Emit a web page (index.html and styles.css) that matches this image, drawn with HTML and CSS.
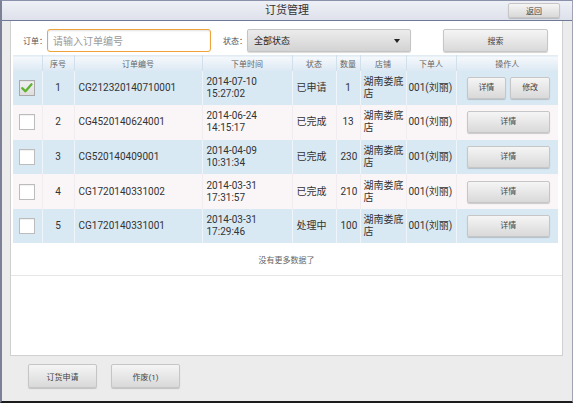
FILE: index.html
```html
<!DOCTYPE html>
<html lang="zh-CN">
<head>
<meta charset="utf-8">
<title>订货管理</title>
<link rel="stylesheet" href="styles.css">
</head>
<body>
<div class="app">
  <header class="topbar">
    <div class="topbar-side"></div>
    <div class="title">订货管理</div>
    <div class="topbar-side topbar-right"><div class="btn btn-back">返回</div></div>
  </header>
  <main class="panel">
    <div class="search">
      <span class="label">订单：</span>
      <div class="input">请输入订单编号</div>
      <span class="label label-state">状态：</span>
      <div class="select"><span>全部状态</span><span class="caret"></span></div>
      <div class="btn btn-search">搜索</div>
    </div>
    <table class="grid">
      <colgroup>
        <col class="c-cb"><col class="c-no"><col class="c-code"><col class="c-time"><col class="c-state"><col class="c-qty"><col class="c-shop"><col class="c-user"><col class="c-op">
      </colgroup>
      <thead>
        <tr><th></th><th>序号</th><th>订单编号</th><th>下单时间</th><th>状态</th><th>数量</th><th>店铺</th><th>下单人</th><th>操作人</th></tr>
      </thead>
      <tbody>
        <tr class="odd">
          <td><div class="cb checked"><svg viewBox="0 0 16 16" width="14" height="14"><path d="M2.5 8.2 L6.3 11.8 L13.2 3.8" fill="none" stroke="#62b232" stroke-width="2.6" stroke-linecap="round" stroke-linejoin="round"/></svg></div></td>
          <td class="center">1</td><td>CG212320140710001</td><td>2014-07-10<br>15:27:02</td><td>已申请</td><td class="center">1</td><td class="shop">湖南娄底店</td><td class="user">001(刘丽)</td>
          <td class="op"><div class="ops"><div class="btn btn-sm">详情</div><div class="btn btn-sm">修改</div></div></td>
        </tr>
        <tr class="even">
          <td><div class="cb"></div></td>
          <td class="center">2</td><td>CG4520140624001</td><td>2014-06-24<br>14:15:17</td><td>已完成</td><td class="center">13</td><td class="shop">湖南娄底店</td><td class="user">001(刘丽)</td>
          <td class="op"><div class="ops"><div class="btn btn-sm">详情</div></div></td>
        </tr>
        <tr class="odd">
          <td><div class="cb"></div></td>
          <td class="center">3</td><td>CG520140409001</td><td>2014-04-09<br>10:31:34</td><td>已完成</td><td class="center">230</td><td class="shop">湖南娄底店</td><td class="user">001(刘丽)</td>
          <td class="op"><div class="ops"><div class="btn btn-sm">详情</div></div></td>
        </tr>
        <tr class="even">
          <td><div class="cb"></div></td>
          <td class="center">4</td><td>CG1720140331002</td><td>2014-03-31<br>17:31:57</td><td>已完成</td><td class="center">210</td><td class="shop">湖南娄底店</td><td class="user">001(刘丽)</td>
          <td class="op"><div class="ops"><div class="btn btn-sm">详情</div></div></td>
        </tr>
        <tr class="odd">
          <td><div class="cb"></div></td>
          <td class="center">5</td><td>CG1720140331001</td><td>2014-03-31<br>17:29:46</td><td>处理中</td><td class="center">100</td><td class="shop">湖南娄底店</td><td class="user">001(刘丽)</td>
          <td class="op"><div class="ops"><div class="btn btn-sm">详情</div></div></td>
        </tr>
      </tbody>
    </table>
    <div class="nomore">没有更多数据了</div>
  </main>
  <footer class="footer">
    <div class="btn btn-foot">订货申请</div>
    <div class="btn btn-foot">作废(1)</div>
  </footer>
</div>
</body>
</html>
```
FILE: styles.css
```css
* { box-sizing: border-box; }
html, body { margin: 0; padding: 0; }
body {
  font-family: Roboto, "Noto Sans CJK SC", sans-serif;
  color: #333;
  background: #ececec;
}
.app {
  width: 573px;
  height: 403px;
  border-top: 1px solid #8a92ab;
  border-left: 2px solid #7b8096;
  border-right: 1px solid #a0a4b2;
  border-bottom: 2px solid #1c1c1c;
  background: #ececec;
  display: flex;
  flex-direction: column;
}
.topbar {
  flex: none;
  height: 20px;
  border-bottom: 1px solid #6f7a99;
  background: linear-gradient(#eef0f6, #dee1eb);
  display: grid;
  grid-template-columns: 1fr auto 1fr;
  align-items: center;
}
.title {
  font-size: 11px;
  color: #333;
  line-height: 19px;
}
.topbar-right {
  display: flex;
  justify-content: flex-end;
  padding-right: 12px;
}
.btn {
  display: flex;
  align-items: center;
  justify-content: center;
  background: linear-gradient(#f5f5f5, #d9d9d9);
  border: 1px solid #c6c6c6;
  border-radius: 2px;
  box-shadow: 0 1px 1px rgba(0, 0, 0, 0.18);
  font-size: 8px;
  color: #444;
}
.btn-back {
  width: 52px;
  height: 15px;
}
.panel {
  flex: none;
  height: 335px;
  margin: 0 9px 0 8px;
  background: #fff;
  border: 1px solid #d0d0d0;
  border-top: none;
  display: flex;
  flex-direction: column;
}
.search {
  display: flex;
  align-items: center;
  height: 23px;
  margin: 8px 0 3px;
  padding-left: 12px;
}
.label {
  font-size: 8px;
  color: #555;
  width: 24px;
  flex: none;
}
.label-state {
  margin-left: 12px;
}
.input {
  width: 164px;
  height: 23px;
  border: 1.5px solid #eea33c;
  border-radius: 3px;
  box-shadow: inset 0 1px 2px rgba(0, 0, 0, 0.12);
  font-size: 10px;
  color: #9a9a9a;
  display: flex;
  align-items: center;
  padding-left: 5px;
}
.select {
  width: 164px;
  height: 23px;
  border: 1px solid #c4c4c4;
  border-radius: 2px;
  background: linear-gradient(#ececec, #d3d3d3);
  box-shadow: 0 1px 1px rgba(0, 0, 0, 0.15);
  display: flex;
  align-items: center;
  justify-content: space-between;
  padding: 0 10px 0 6px;
  font-size: 9px;
  color: #222;
}
.caret {
  width: 0;
  height: 0;
  border-left: 3.5px solid transparent;
  border-right: 3.5px solid transparent;
  border-top: 4px solid #222;
}
.btn-search {
  width: 105px;
  height: 23px;
  margin-left: 32px;
}
.grid {
  margin-left: 2px;
  width: 545px;
  border-collapse: collapse;
  table-layout: fixed;
}
.c-cb { width: 29px; }
.c-no { width: 32px; }
.c-code { width: 128px; }
.c-time { width: 90px; }
.c-state { width: 44px; }
.c-qty { width: 24px; }
.c-shop { width: 46px; }
.c-user { width: 50px; }
.c-op { width: 102px; }
.grid th {
  height: 15px;
  padding: 0;
  font-size: 8px;
  font-weight: normal;
  color: #666;
  background: linear-gradient(#f6f9fc, #dbe8f3);
  border-right: 1px solid #d2e0ec;
  border-top: 1px solid #e3ecf3;
}
.grid td {
  height: 34.6px;
  padding: 0 4px;
  font-size: 10px;
  line-height: 12px;
  color: #333;
  border-right: 1px solid #eef5fa;
  vertical-align: middle;
}
.grid th:last-child, .grid td:last-child { border-right: none; }
.grid tr.odd td { background: #d9e9f4; }
.grid tr.even td { background: #faf6f8; border-right-color: #f0ecef; }
.grid td.center { text-align: center; }
.grid td.shop { padding: 0 1px 0 3px; }
.grid td.user { padding: 0 1px 0 2px; white-space: nowrap; }
.cb {
  width: 16px;
  height: 16px;
  margin: 0 auto;
  border: 1px solid #bcbcbc;
  background: #fff;
  box-shadow: inset 0 1px 1px rgba(0, 0, 0, 0.06);
  display: flex;
  align-items: center;
  justify-content: center;
}
.cb.checked {
  background: linear-gradient(#f2f2f2, #dedede);
  border-color: #a9a9a9;
}
.grid td.op { padding: 0 8px 0 10px; }
.ops {
  display: flex;
  gap: 4px;
}
.btn-sm {
  flex: 1;
  height: 22px;
}
.nomore {
  height: 33px;
  border-bottom: 1px solid #e6e6e6;
  display: flex;
  align-items: center;
  justify-content: center;
  font-size: 8px;
  color: #666;
}
.footer {
  display: flex;
  gap: 14px;
  padding: 8px 0 0 26px;
}
.btn-foot {
  width: 69px;
  height: 24px;
}
```
